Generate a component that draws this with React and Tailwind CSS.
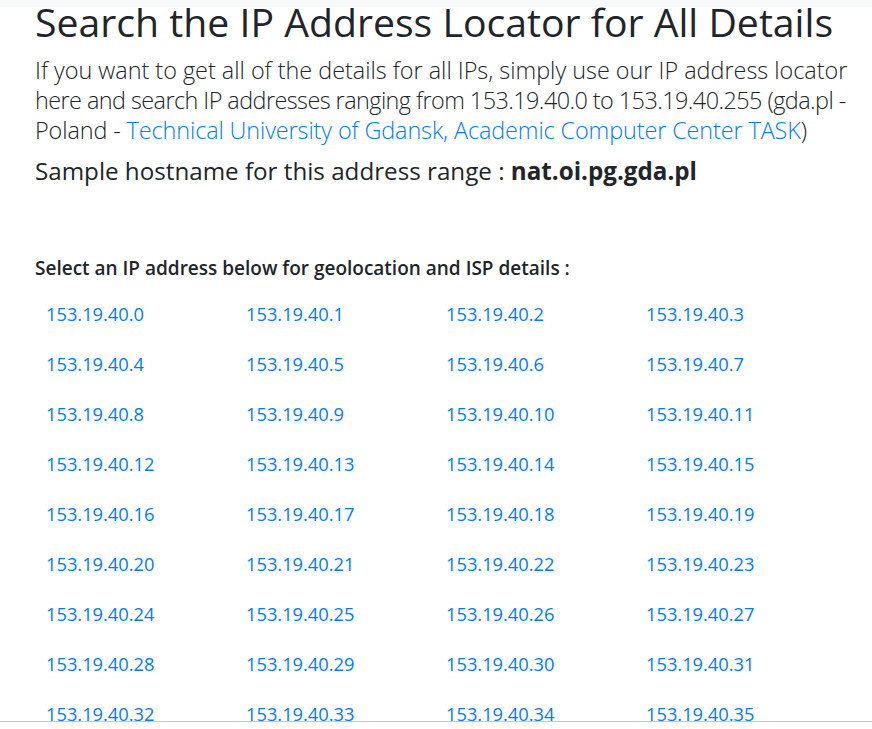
import React from 'react';

const ips = Array.from({ length: 256 }, (_, i) => `153.19.40.${i}`);

export default function App() {
  return (
    <div className="h-[729px] bg-white text-[#212529] font-['Open_Sans',sans-serif]">
      <div className="h-[722px] overflow-hidden border-b border-[#c8c8c8]">
        {/* top strip */}
        <div className="h-[7px] bg-[#f8f9fa]" />

        <div className="pl-[35px] pr-[15px]">
          {/* Header */}
          <h1 className="-mt-[7px] text-[39.2px] leading-[44px] whitespace-nowrap">
            Search the IP Address Locator for All Details
          </h1>

          <p className="mt-[11px] text-[23.4px] leading-[30px] font-light whitespace-nowrap">
            <span className="block">If you want to get all of the details for all IPs, simply use our IP address locator</span>
            <span className="block tracking-[-0.55px]">here and search IP addresses ranging from 153.19.40.0 to 153.19.40.255 (gda.pl -</span>
            <span className="block tracking-[-0.1px]">
              Poland - <a href="#" className="text-[#007bff]">Technical University of Gdansk, Academic Computer Center TASK</a>)
            </span>
          </p>

          <h4 className="mt-[11px] text-[24.2px] leading-[30px] whitespace-nowrap">
            Sample hostname for this address range : <span className="font-bold">nat.oi.pg.gda.pl</span>
          </h4>

          <h6 className="mt-[70px] text-[19px] leading-[24px] font-semibold whitespace-nowrap">
            Select an IP address below for geolocation and ISP details :
          </h6>

          {/* IP grid */}
          <div className="mt-[9px] pl-[11px] grid grid-cols-[repeat(4,200px)]">
            {ips.map((ip) => (
              <a key={ip} href="#" className="h-[50px] flex items-center text-[18.3px] text-[#007bff]">
                {ip}
              </a>
            ))}
          </div>
        </div>
      </div>
    </div>
  );
}
